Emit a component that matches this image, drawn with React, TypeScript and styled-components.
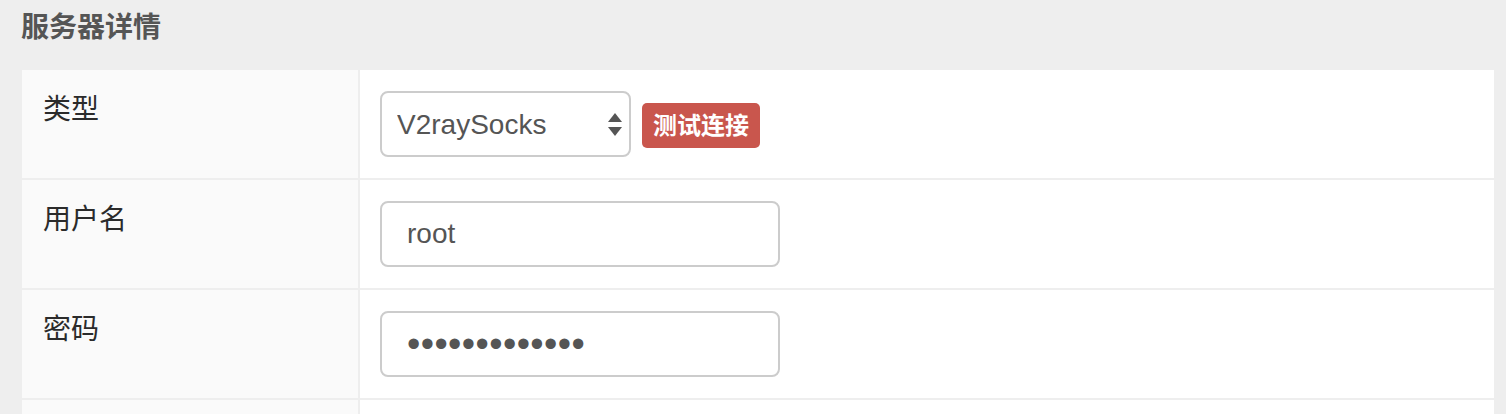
import React from "react";
import styled, { createGlobalStyle } from "styled-components";

const GlobalStyle = createGlobalStyle`
    html, body {
        margin: 0;
        padding: 0;
        background: #eeeeee;
    }
    body {
        font-family: "Liberation Sans", "Noto Sans CJK SC", sans-serif;
        color: #333;
    }
`;

const Page = styled.div`
    padding: 8px 12px 0 22px;
`;

const Title = styled.h4`
    margin: 0 0 22px -1px;
    font-size: 28px;
    line-height: 40px;
    font-weight: bold;
    color: #555;
`;

const Table = styled.div`
    display: grid;
    grid-template-columns: 336px 1fr;
    gap: 2px;
    background: #eeeeee;
`;

const LabelCell = styled.div`
    background: #fafafa;
    padding: 20px 21px;
    font-size: 28px;
    line-height: 40px;
    color: #2b2b2b;
    min-height: 66px;
`;

const ValueCell = styled.div`
    background: #fff;
    padding: 21px 20px;
    display: flex;
    align-items: center;
    gap: 11px;
    min-height: 66px;
`;

const SelectWrap = styled.div`
    position: relative;
    width: 251px;
    height: 66px;
`;

const Select = styled.select`
    appearance: none;
    -webkit-appearance: none;
    box-sizing: border-box;
    width: 100%;
    height: 100%;
    border: 2px solid #cccccc;
    border-radius: 8px;
    background: #fff;
    padding: 0 40px 0 15px;
    font-family: "Liberation Sans", "Noto Sans CJK SC", sans-serif;
    font-size: 28px;
    color: #555;
    outline: none;
`;

const Arrows = styled.svg`
    position: absolute;
    right: 9px;
    top: 22px;
    pointer-events: none;
`;

const Input = styled.input<{ $masked?: boolean }>`
    box-sizing: border-box;
    width: 400px;
    height: 66px;
    border: 2px solid #cccccc;
    border-radius: 8px;
    background: #fff;
    padding: 0 25px;
    font-family: "Liberation Sans", "Noto Sans CJK SC", sans-serif;
    font-size: ${({ $masked }) => ($masked ? "38px" : "28px")};
    letter-spacing: ${({ $masked }) => ($masked ? "0.4px" : "normal")};
    color: #555;
    outline: none;
`;

const TestButton = styled.button`
    border: none;
    border-radius: 5px;
    background: #c9564d;
    color: #fff;
    font-family: "Liberation Sans", "Noto Sans CJK SC", sans-serif;
    font-size: 24px;
    font-weight: bold;
    height: 45px;
    padding: 0 11px;
    line-height: 45px;
    margin-top: 3px;
    cursor: pointer;
`;

export default function App() {
    return (
        <Page>
            <GlobalStyle />
            <Title>服务器详情</Title>
            <Table>
                <LabelCell>类型</LabelCell>
                <ValueCell>
                    <SelectWrap>
                        <Select defaultValue="V2raySocks">
                            <option>V2raySocks</option>
                            <option>Shadowsocks</option>
                        </Select>
                        <Arrows width="14" height="24" viewBox="0 0 14 24">
                            <path d="M7 0 L14 9 L0 9 Z" fill="#555" />
                            <path d="M0 14 L14 14 L7 23 Z" fill="#555" />
                        </Arrows>
                    </SelectWrap>
                    <TestButton>测试连接</TestButton>
                </ValueCell>

                <LabelCell>用户名</LabelCell>
                <ValueCell>
                    <Input type="text" defaultValue="root" />
                </ValueCell>

                <LabelCell>密码</LabelCell>
                <ValueCell>
                    <Input type="password" $masked defaultValue="1234567890123" />
                </ValueCell>

                {/* next row starts just at the bottom edge */}
                <LabelCell />
                <ValueCell />
            </Table>
        </Page>
    );
}
